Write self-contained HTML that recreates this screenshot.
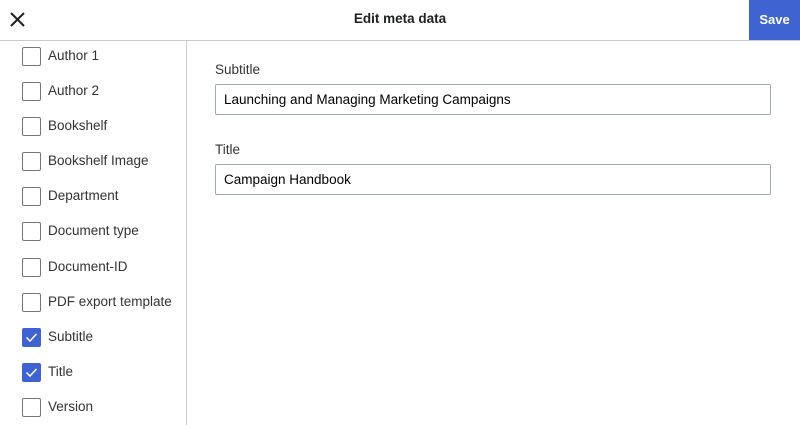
<!DOCTYPE html>
<html><head><style>
body{margin:0;width:800px;height:425px;overflow:hidden;background:#fff;font-family:"Liberation Sans",sans-serif;color:#202122;position:relative}
.hdr{position:absolute;left:0;top:0;width:800px;height:41px;border-bottom:1px solid #c8ccd1;box-sizing:border-box}
.title{position:absolute;left:0;width:800px;top:11px;text-align:center;font-weight:bold;font-size:13.5px}
.save{position:absolute;right:0;top:0;width:51px;height:40px;background:#3f63d0;color:#fff;font-weight:bold;font-size:13px;text-align:center;line-height:40px}
.side{position:absolute;left:186px;top:40px;width:1px;height:385px;background:#c8ccd1}
.row{position:absolute;left:22px;height:20px;font-size:13.5px;color:#333}
.cb{position:absolute;left:0;top:0;width:19px;height:19px;box-sizing:border-box;border:1px solid #72777d;border-radius:2px;background:#fff}
.cb.on{background:#3f63d0;border-color:#3f63d0}
.row span{position:absolute;left:26px;top:1px;white-space:nowrap}
.lbl{position:absolute;left:215px;font-size:13.5px;color:#333}
.inp{position:absolute;left:215px;width:556px;height:31px;box-sizing:border-box;border:1px solid #a2a9b1;border-radius:2px;font-size:13.5px;padding:7px 8px;color:#000}
</style></head><body>
<div class="hdr"></div>
<svg style="position:absolute;left:10px;top:12px" width="15" height="15" viewBox="0 0 15 15"><path d="M1 1L14 14M14 1L1 14" stroke="#202122" stroke-width="2"/></svg>
<div class="title">Edit meta data</div>
<div class="save">Save</div>
<div class="side"></div>
<div class="row" style="top:47px"><div class="cb"></div><span>Author 1</span></div>
<div class="row" style="top:82px"><div class="cb"></div><span>Author 2</span></div>
<div class="row" style="top:117px"><div class="cb"></div><span>Bookshelf</span></div>
<div class="row" style="top:152px"><div class="cb"></div><span>Bookshelf Image</span></div>
<div class="row" style="top:187px"><div class="cb"></div><span>Department</span></div>
<div class="row" style="top:222px"><div class="cb"></div><span>Document type</span></div>
<div class="row" style="top:258px"><div class="cb"></div><span>Document-ID</span></div>
<div class="row" style="top:293px"><div class="cb"></div><span>PDF export template</span></div>
<div class="row" style="top:328px"><div class="cb on"><svg width="17" height="17" viewBox="0 0 17 17"><path d="M3.5 8.5L7 12L13.5 5" stroke="#fff" stroke-width="1.5" fill="none"/></svg></div><span>Subtitle</span></div>
<div class="row" style="top:363px"><div class="cb on"><svg width="17" height="17" viewBox="0 0 17 17"><path d="M3.5 8.5L7 12L13.5 5" stroke="#fff" stroke-width="1.5" fill="none"/></svg></div><span>Title</span></div>
<div class="row" style="top:398px"><div class="cb"></div><span>Version</span></div>
<div class="lbl" style="top:62px">Subtitle</div>
<div class="inp" style="top:84px">Launching and Managing Marketing Campaigns</div>
<div class="lbl" style="top:142px">Title</div>
<div class="inp" style="top:164px">Campaign Handbook</div>
</body></html>
